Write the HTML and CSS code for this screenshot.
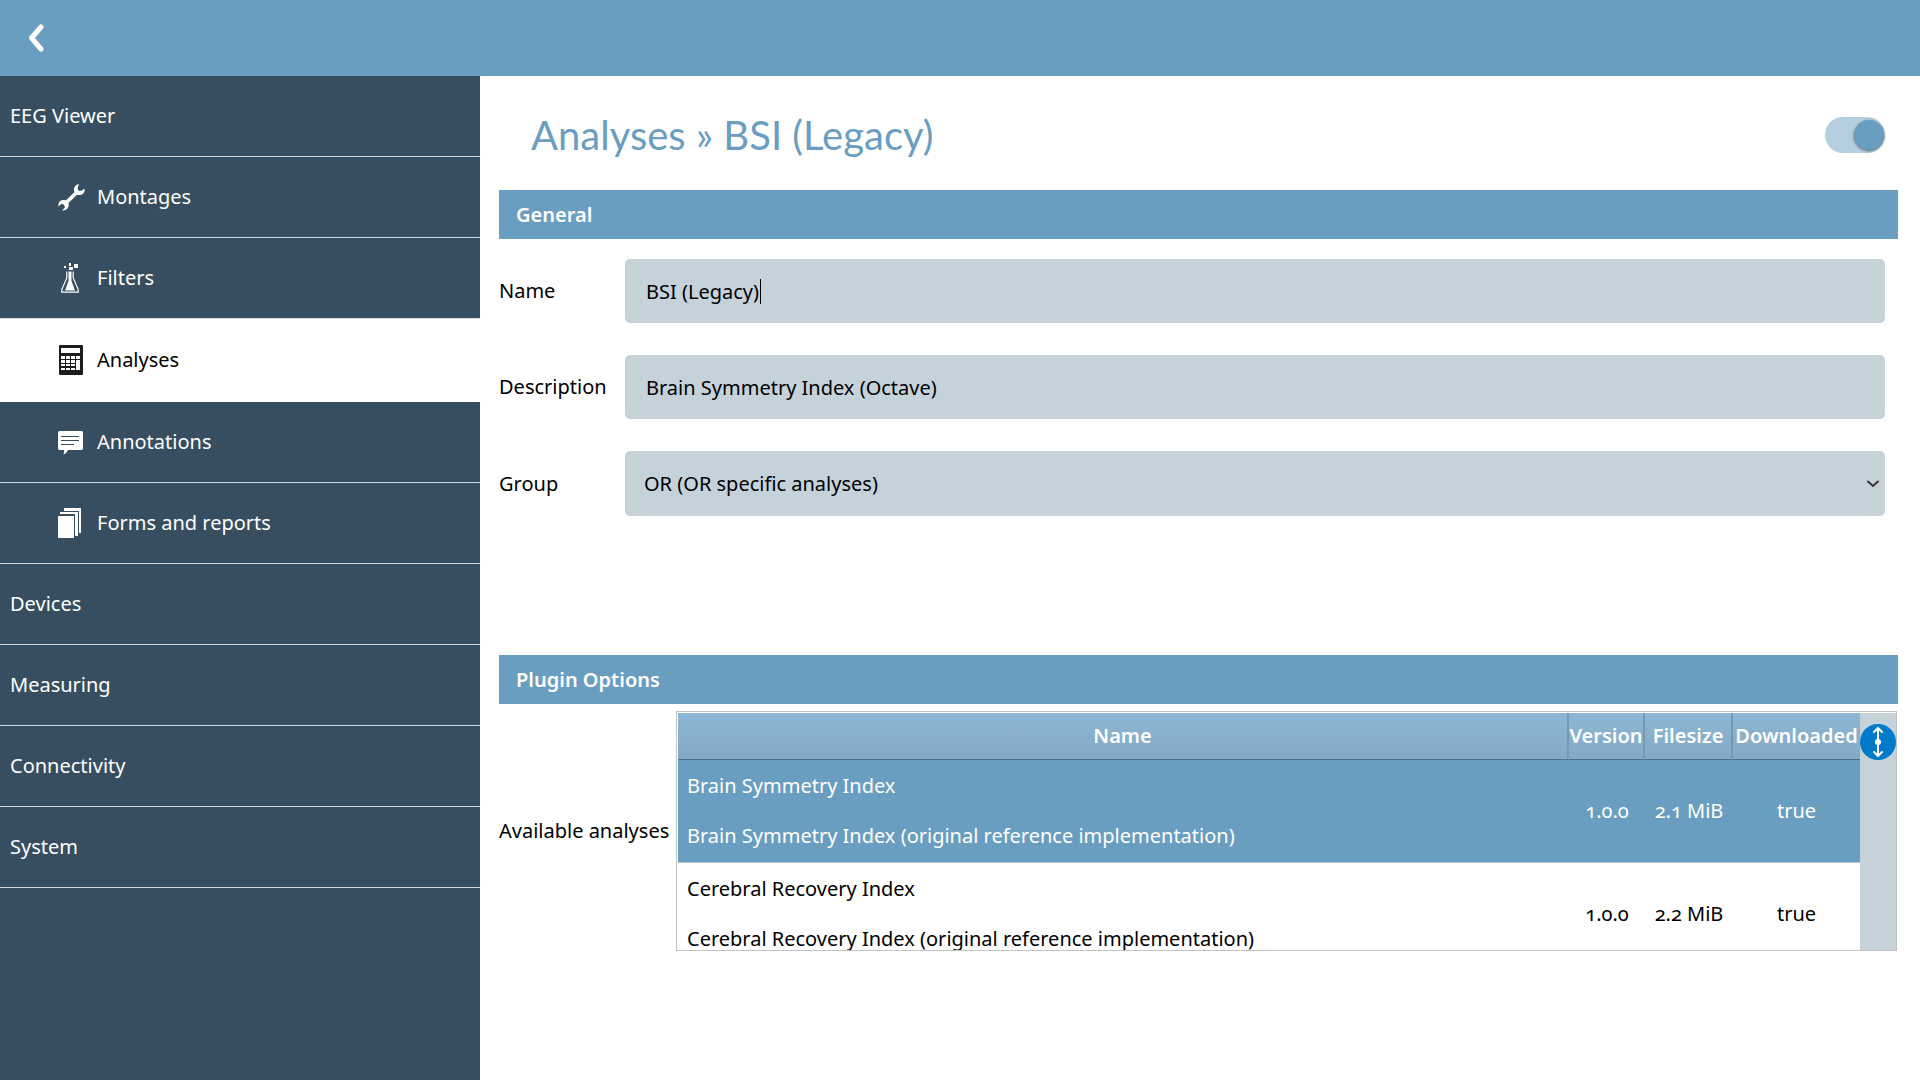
FILE: index.html
```html
<!DOCTYPE html>
<html lang="en">
<head>
  <meta charset="UTF-8">
  <meta name="viewport" content="width=device-width, initial-scale=1.0">
  <title>Analyses - BSI (Legacy)</title>
  <link rel="stylesheet" href="styles.css">
</head>
<body>
  <header class="topbar">
    <button class="back" type="button" aria-label="Back">
      <svg width="16" height="28" viewBox="0 0 16 28"><path d="M13 3L3.500 14L13 25" fill="none" stroke="#fff" stroke-width="5" stroke-linecap="round" stroke-linejoin="round"/></svg>
    </button>
  </header>

  <div class="page">
    <nav class="sidebar">
      <a href="#">EEG Viewer</a>
      <a href="#" class="sub">
        <svg width="28" height="30" viewBox="0 0 28 30"><path d="M22 2L20.500 6.500L22 9L25 8.500L27.500 6.500Q28 11 25 12.500Q22.500 13.500 20 12.800L11.500 21Q12.500 24 10.500 26.500Q8.500 29 5 28.500L8 25.500L7 22.500L4 22L1.500 24.500Q1 20.500 3.500 18.800Q6 17.500 9 18.300L17.300 10.200Q16 7 18 4.200Q19.500 2.300 22 2Z" fill="#fff"/></svg>
        Montages
      </a>
      <a href="#" class="sub">
        <svg width="28" height="30" viewBox="0 0 28 30" fill="#fff"><path d="M7 3h2v2H7zM12 0h2v3h-2zM12 4h4v3h-4zM17 1h4v4h-4z"/><path d="M9.800 8.500V15L4.800 26.500V29.200H21.200V26.500L16.200 15V8.500" fill="none" stroke="#fff" stroke-width="1.200"/><path d="M11.500 8.500h3V18l3.500 9.500H8L11.500 18z"/></svg>
        Filters
      </a>
      <a href="#" class="sub active">
        <svg width="28" height="30" viewBox="0 0 28 30"><rect x="2" width="24" height="30" rx="1" fill="#1d1d1b"/><path d="M4 3h19v5H4zM4 11h4v3H4zM9 11h4v3H9zM14 11h4v3h-4zM19 11h4v3h-4zM4 15h4v3H4zM9 15h4v3H9zM14 15h4v3h-4zM4 19h4v2H4zM9 19h4v2H9zM14 19h4v2h-4zM4 23h4v2H4zM9 23h4v2H9zM14 23h4v2h-4zM19 15h4v10h-4z" fill="#fff"/></svg>
        Analyses
      </a>
      <a href="#" class="sub">
        <svg width="28" height="30" viewBox="0 0 28 30"><path d="M2 4h23l1 1v17l-1 1H11q-1 3-4.500 4.500Q7.500 25 7 23H2l-1-1V5z" fill="#fff"/><path d="M4 9.500h18M4 13.500h18M4 17.500h13" stroke="#374e60"/></svg>
        Annotations
      </a>
      <a href="#" class="sub">
        <svg width="28" height="30" viewBox="0 0 28 30" fill="#fff"><path d="M1 8h16v22H1zM3 4h18v24h-3V6H3zM7 0h17v25h-2V3H7z"/></svg>
        Forms and reports
      </a>
      <a href="#">Devices</a>
      <a href="#">Measuring</a>
      <a href="#">Connectivity</a>
      <a href="#">System</a>
    </nav>

    <main class="content">
      <div class="title-row">
        <h1>Analyses » BSI (Legacy)</h1>
        <input type="checkbox" class="switch" aria-label="Enabled" checked>
      </div>

      <section class="general">
        <h2>General</h2>
        <div class="field">
          <label for="name">Name</label>
          <input type="text" id="name" class="editing" value="BSI (Legacy)">
        </div>
        <div class="field">
          <label for="description">Description</label>
          <input type="text" id="description" value="Brain Symmetry Index (Octave)">
        </div>
        <div class="field">
          <label for="group">Group</label>
          <div class="select">
            <select id="group">
              <option>OR (OR specific analyses)</option>
            </select>
            <svg width="14" height="8" viewBox="0 0 14 8"><path d="M2 1.500L7 6L12 1.500" fill="none" stroke="#333" stroke-width="2" stroke-linecap="round"/></svg>
          </div>
        </div>
      </section>

      <section>
        <h2>Plugin Options</h2>
        <div class="plugins">
          <span id="available">Available analyses</span>
          <div class="list">
            <table aria-labelledby="available">
              <thead>
                <tr>
                  <th>Name</th>
                  <th class="version">Version</th>
                  <th class="filesize">Filesize</th>
                  <th class="downloaded">Downloaded</th>
                </tr>
              </thead>
              <tbody>
                <tr class="selected">
                  <td>Brain Symmetry Index<br>Brain Symmetry Index (original reference implementation)</td>
                  <td>1.0.0</td>
                  <td>2.1 MiB</td>
                  <td>true</td>
                </tr>
                <tr>
                  <td>Cerebral Recovery Index<br>Cerebral Recovery Index (original reference implementation)</td>
                  <td>1.0.0</td>
                  <td>2.2 MiB</td>
                  <td>true</td>
                </tr>
              </tbody>
            </table>
            <div class="scrollbar">
              <svg width="36" height="36" viewBox="0 0 36 36"><circle cx="18" cy="18" r="18" fill="#007ac9"/><path d="M18 4V32M14 8L18 4L22 8M14 28L18 32L22 28" fill="none" stroke="#fff" stroke-width="2" stroke-linecap="round"/><circle cx="18" cy="18" r="3" fill="#fff"/></svg>
            </div>
          </div>
        </div>
      </section>
    </main>
  </div>
</body>
</html>
```

FILE: styles.css
```css
* {
  box-sizing: border-box;
}
body {
  font-family: 'Noto Sans', sans-serif;
  font-size: 20px;
  line-height: 28px;
  font-variant-numeric: oldstyle-nums;
  margin: 0;
  color: #000;
  background-color: #fff;
  display: flex;
  flex-direction: column;
  min-height: 100vh;
}
.topbar {
  height: 76px;
  background-color: #6a9ec1;
  display: flex;
  align-items: center;
  padding: 0 28px;
}
.back {
  display: flex;
  padding: 0;
  border: none;
  background: none;
}
.page {
  display: flex;
  flex: 1;
}

/* menu */
.sidebar {
  width: 25%;
  background-color: #374e60;
}
.sidebar a {
  display: flex;
  align-items: center;
  height: 81px;
  padding-left: 10px;
  gap: 12px;
  color: #fff;
  text-decoration: none;
  border-bottom: 1px solid #d5dade;
}
.sidebar .sub {
  padding-left: 57px;
}
.sidebar .active {
  height: 83px;
  background-color: #fff;
  color: #000;
  border-color: #fff;
}

/* settings */
.content {
  flex: 1;
  min-width: 0;
  padding: 0 22px 0 19px;
}
.title-row {
  display: flex;
  align-items: center;
  justify-content: space-between;
  height: 114px;
  padding: 4px 13px 0 32px;
}
h1 {
  margin: 0;
  font-family: Lato, sans-serif;
  font-size: 40px;
  line-height: 48px;
  font-weight: 400;
  color: #6a9ec1;
}
.switch {
  appearance: none;
  display: flex;
  align-items: center;
  justify-content: flex-end;
  width: 60px;
  height: 36px;
  margin: 0;
  padding-right: 1px;
  border-radius: 18px;
  background-color: #b5cee0;
}
.switch::before {
  content: "";
  width: 30px;
  height: 30px;
  border-radius: 50%;
  background-color: #6a9ec1;
  box-shadow: 0 1px 3px rgba(0, 0, 0, 0.5);
}
h2 {
  margin: 0;
  padding: 0 17px;
  font-size: 20px;
  line-height: 49px;
  font-weight: 600;
  color: #fff;
  background-color: #6a9ec1;
}
.general {
  margin-bottom: 139px;
}
.field {
  display: flex;
  align-items: center;
  margin: 20px 13px 32px 0;
}
.field + .field {
  margin-top: 0;
}
.field label {
  width: 126px;
}
.field input,
.field select {
  flex: 1;
  width: 100%;
  height: 64px;
  padding: 0 21px;
  border: none;
  border-radius: 5px;
  background-color: #c6d2da;
  font: inherit;
  color: #000;
}
.field .editing {
  background-image: linear-gradient(#000, #000);
  background-size: 1px 25px;
  background-position: 135px 20px;
  background-repeat: no-repeat;
}
.select {
  flex: 1;
  position: relative;
}
.field select {
  appearance: none;
  display: block;
  height: 65px;
  padding: 0 19px;
}
.select svg {
  position: absolute;
  right: 5px;
  top: 29px;
}

/* list of analyses */
.plugins {
  display: flex;
  align-items: center;
  margin: 7px 1px 0 0;
}
.plugins > span {
  width: 177px;
}
.list {
  flex: 1;
  display: flex;
  align-items: flex-start;
  height: 240px;
  padding: 1px 0 0 1px;
  border: 1px solid #c3c3c3;
  overflow: hidden;
}
table {
  flex: 1;
  table-layout: fixed;
  border-collapse: separate;
  border-spacing: 0;
}
th {
  height: 47px;
  padding: 0;
  font-weight: 600;
  color: #fff;
  background-image: linear-gradient(#8db7d4, #83a9c5);
  border-bottom: 1px solid #477290;
  border-right: 2px solid #7399b5;
}
th:last-child {
  border-right: none;
}
.version {
  width: 76px;
}
.filesize {
  width: 88px;
}
.downloaded {
  width: 127px;
}
td {
  padding: 1px 0;
  line-height: 50px;
  text-align: center;
  border-bottom: 1px solid #b4c5d1;
}
td:first-child {
  padding-left: 9px;
  text-align: left;
}
.selected {
  color: #fff;
  background-color: #6a9ec1;
}
.scrollbar {
  width: 36px;
  height: 237px;
  padding-top: 11px;
  background-color: #c6d2da;
}
```
